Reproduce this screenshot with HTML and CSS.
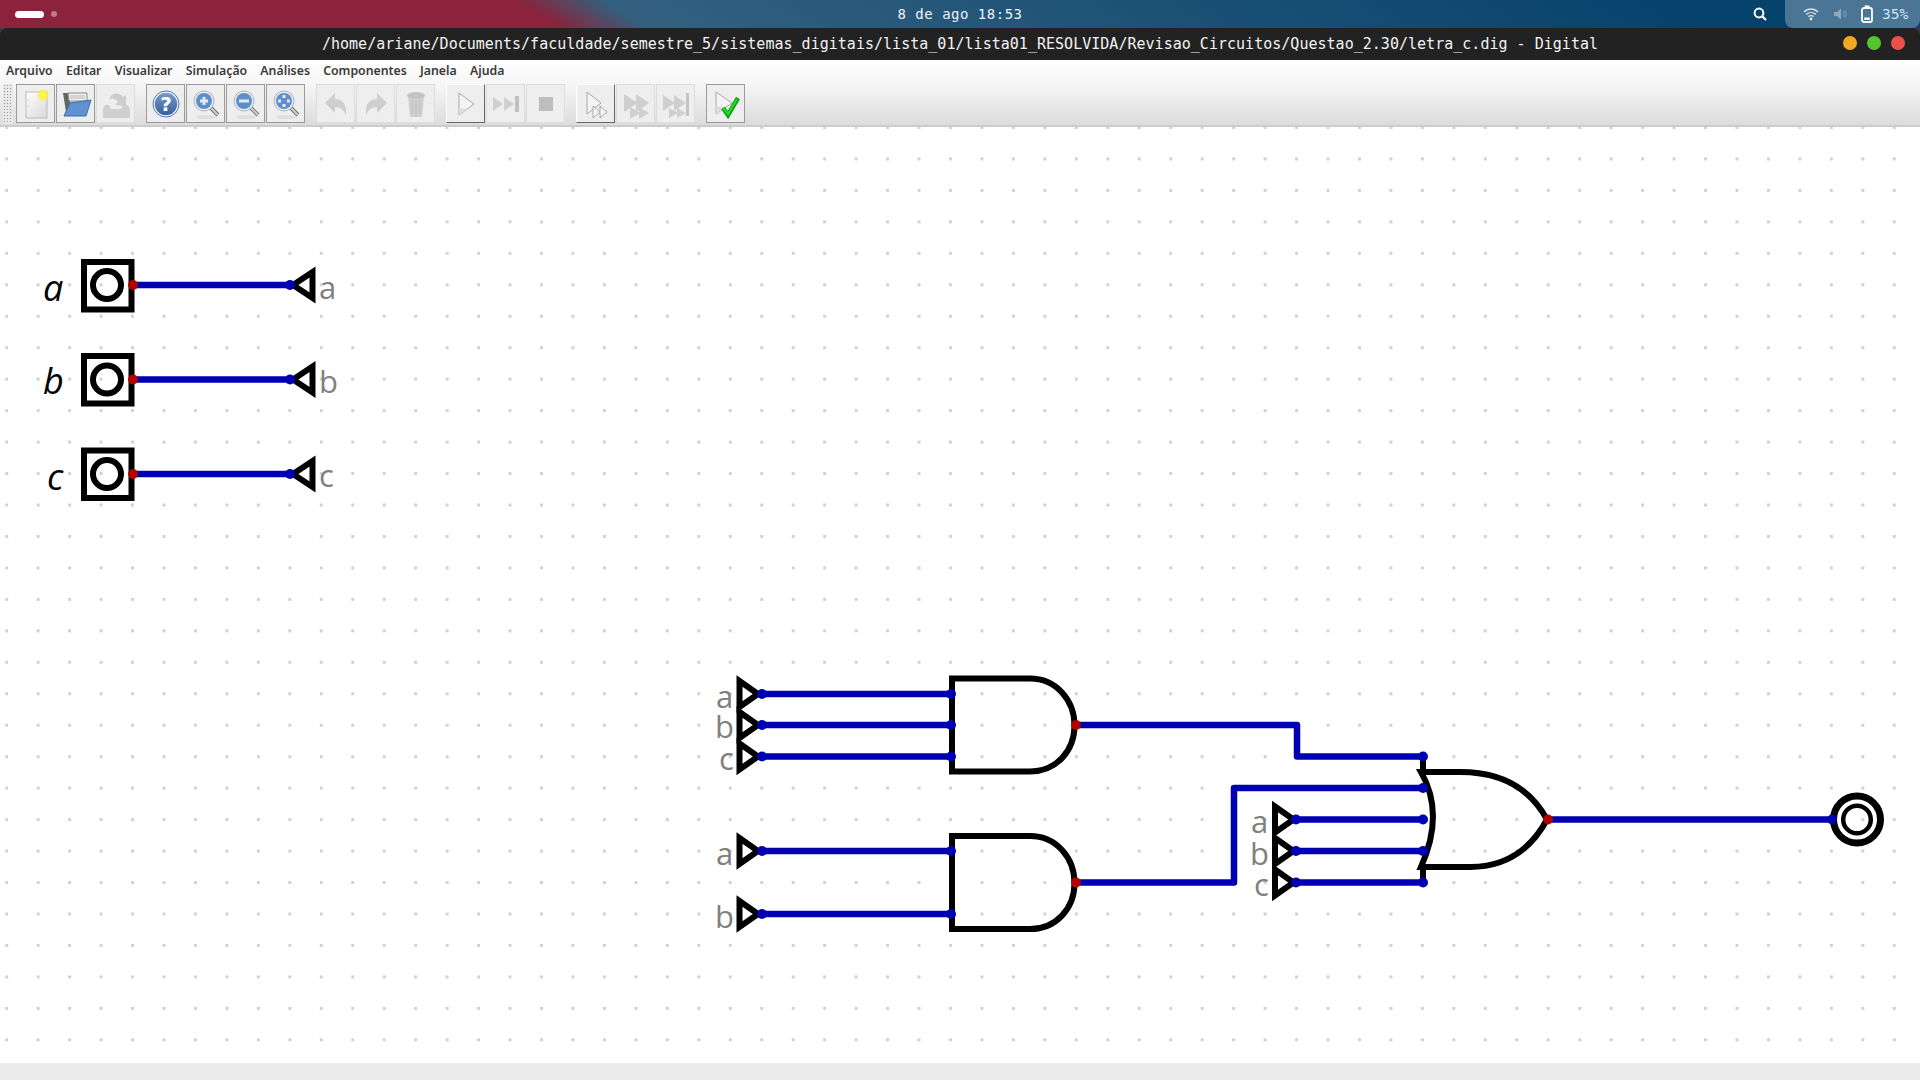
FILE: index.html
```html
<!DOCTYPE html>
<html lang="pt">
<head>
<meta charset="utf-8">
<title>Digital</title>
<link rel="stylesheet" href="styles.css">
</head>
<body>
<div class="app">
  <header class="topbar">
    <div class="workspaces"><span class="pill"></span><span class="wsdot"></span></div>
    <div class="clock">8 de ago 18:53</div>
    <svg class="searchicon" width="16" height="16" viewBox="0 0 16 16"><circle cx="7" cy="7" r="4.4" fill="none" stroke="#fff" stroke-width="2"/><path d="M10.2 10.2L14 14" stroke="#fff" stroke-width="2.2"/></svg>
    <div class="tray">
      <svg width="16" height="14" viewBox="0 0 16 14"><path d="M1 5C5 1 11 1 15 5M3.2 7.4C6 5 10 5 12.8 7.4M5.4 9.6C7 8.4 9 8.4 10.6 9.6" fill="none" stroke="#d5e0e8" stroke-width="1.4"/><circle cx="8" cy="12" r="1.4" fill="#e6edf2"/></svg>
      <svg width="14" height="14" viewBox="0 0 14 14"><path d="M1 5H4L8 1.5V12.5L4 9H1Z" fill="#8fa9bc"/><path d="M10 4.5C11.3 5.8 11.3 8.2 10 9.5M11.6 3C13.6 5 13.6 9 11.6 11" fill="none" stroke="#7d9ab0" stroke-width="1.2"/></svg>
      <svg width="12" height="18" viewBox="0 0 12 18"><rect x="1" y="3" width="10" height="14" rx="2" fill="none" stroke="#fff" stroke-width="1.8"/><rect x="3.6" y="0.5" width="4.8" height="2.5" fill="#fff"/><rect x="3.2" y="12.500" width="5.6" height="2.4" fill="#fff"/></svg>
      <span class="battery">35%</span>
    </div>
  </header>
  <div class="titlewrap">
    <div class="titlebar">
      <span class="titletext">/home/ariane/Documents/faculdade/semestre_5/sistemas_digitais/lista_01/lista01_RESOLVIDA/Revisao_Circuitos/Questao_2.30/letra_c.dig - Digital</span>
      <div class="winbtns"><span class="wb wb-min"></span><span class="wb wb-max"></span><span class="wb wb-close"></span></div>
    </div>
  </div>
  <nav class="menubar">
    <span>Arquivo</span><span>Editar</span><span>Visualizar</span><span>Simulação</span><span>Análises</span><span>Componentes</span><span>Janela</span><span>Ajuda</span>
  </nav>
  <div class="toolbar">
    <div class="grip"></div>
    <div class="group">
      <div class="tb"><svg width="32" height="32" viewBox="0 0 32 32"><defs><linearGradient id="pg" x1="0" y1="0" x2="1" y2="1"><stop offset="0" stop-color="#fff"/><stop offset="1" stop-color="#d8d8d8"/></linearGradient><radialGradient id="glow"><stop offset="0" stop-color="#ffff50"/><stop offset=".55" stop-color="#fff040"/><stop offset="1" stop-color="#fff040" stop-opacity="0"/></radialGradient></defs><rect x="6" y="4" width="21" height="26" fill="url(#pg)" stroke="#bbb"/><circle cx="8.5" cy="12" r=".6" fill="#aaa"/><circle cx="8.5" cy="18" r=".6" fill="#aaa"/><circle cx="23" cy="7" r="6.5" fill="url(#glow)"/></svg></div>
      <div class="tb"><svg width="32" height="32" viewBox="0 0 32 32"><path d="M3 5H9L10 7V24H6Z" fill="#666"/><path d="M8 5H27V13H9Z" fill="#eee" stroke="#888" stroke-width="1"/><path d="M10 8H25M10 10H25" stroke="#bbb"/><path d="M10 15L31 12L26 28H4Z" fill="#5e92d2" stroke="#3c6ba8"/></svg></div>
      <div class="tb off"><svg width="32" height="32" viewBox="0 0 32 32"><path d="M5 17H9L11 21H21L23 17H28L30 21V30H3V21Z" fill="#cfcfcf"/><path d="M9 11C12 4 19 4 23 9L26 7L26 18L15 17L18 14C16 11 13 10 9 11Z" fill="#cdcdcd"/></svg></div>
    </div>
    <div class="group">
      <div class="tb"><svg width="32" height="32" viewBox="0 0 32 32"><defs><linearGradient id="hb" x1="0" y1="0" x2="0" y2="1"><stop offset="0" stop-color="#7d9fc9"/><stop offset="1" stop-color="#2f5d9c"/></linearGradient></defs><circle cx="16" cy="16" r="12" fill="url(#hb)" stroke="#fff" stroke-width="1.5"/><circle cx="16" cy="16" r="13" fill="none" stroke="#4a76ae"/><text class="helpq" x="16" y="22.5">?</text></svg></div>
      <div class="tb"><svg width="32" height="32" viewBox="0 0 32 32"><use href="#lens"/><path d="M10 13H18M14 9V17" stroke="#dfeaf6" stroke-width="3"/></svg></div>
      <div class="tb"><svg width="32" height="32" viewBox="0 0 32 32"><use href="#lens"/><path d="M9 13H19" stroke="#dfeaf6" stroke-width="3"/></svg></div>
      <div class="tb"><svg width="32" height="32" viewBox="0 0 32 32"><use href="#lens"/><path d="M14 7V10M14 16V19M8 13H11M17 13H20" stroke="#dfeaf6" stroke-width="3"/></svg></div>
    </div>
    <div class="group">
      <div class="tb off"><svg width="32" height="32" viewBox="0 0 32 32"><path d="M5 15L15 5V11C23 11 27 16 26 27C23 21 20 19 15 19V25Z" fill="#cfcfcf"/></svg></div>
      <div class="tb off"><svg width="32" height="32" viewBox="0 0 32 32"><path d="M27 15L17 5V11C9 11 5 16 6 27C9 21 12 19 17 19V25Z" fill="#cfcfcf"/></svg></div>
      <div class="tb off"><svg width="32" height="32" viewBox="0 0 32 32"><path d="M8 8H24L22 29H10Z" fill="#cfcfcf"/><ellipse cx="16" cy="7.5" rx="9" ry="3.5" fill="#c4c4c4"/><path d="M12 12V27M16 12V27M20 12V27" stroke="#bdbdbd"/></svg></div>
    </div>
    <div class="group">
      <div class="tb raised"><svg width="32" height="32" viewBox="0 0 32 32"><path d="M9 5L24 16L9 27Z" fill="#f4f4f4" stroke="#a8a8a8"/><path d="M9 20V27L17 21Z" fill="#ddd"/></svg></div>
      <div class="tb off"><svg width="32" height="32" viewBox="0 0 32 32"><path d="M3 9L13 16L3 23ZM14 9L24 16L14 23Z" fill="#cfcfcf"/><rect x="25" y="8" width="4" height="16" fill="#c0c0c0"/></svg></div>
      <div class="tb off"><svg width="32" height="32" viewBox="0 0 32 32"><rect x="9" y="9" width="14" height="14" fill="#bdbdbd"/></svg></div>
    </div>
    <div class="group">
      <div class="tb raised"><svg width="32" height="32" viewBox="0 0 32 32"><path d="M7 4L21 15L7 26Z" fill="#f4f4f4" stroke="#a8a8a8"/><path d="M13 18L20 24L13 30ZM20 18L27 24L20 30Z" fill="#f4f4f4" stroke="#a8a8a8"/></svg></div>
      <div class="tb off"><svg width="32" height="32" viewBox="0 0 32 32"><path d="M4 6L18 15L4 24ZM16 6L29 15L16 24ZM10 19L20 25L10 31ZM19 19L29 25L19 31Z" fill="#cfcfcf"/></svg></div>
      <div class="tb off"><svg width="32" height="32" viewBox="0 0 32 32"><path d="M3 7L15 15L3 23ZM14 7L26 15L14 23ZM9 20L18 25L9 30ZM17 20L26 25L17 30Z" fill="#cfcfcf"/><rect x="26" y="5" width="3" height="23" fill="#c4c4c4"/></svg></div>
    </div>
    <div class="group">
      <div class="tb"><svg width="32" height="32" viewBox="0 0 32 32"><path d="M6 4L22 15L6 26Z" fill="#f4f4f4" stroke="#a8a8a8"/><path d="M6 18V26L15 20Z" fill="#ddd"/><path d="M13 20L18 27L28 10" fill="none" stroke="#129c12" stroke-width="4.5"/><path d="M13 20L18 26L27 11" fill="none" stroke="#1ee01e" stroke-width="2"/></svg></div>
    </div>
  </div>
  <main class="canvas">
    <svg class="circuit" width="1920" height="936" viewBox="0 127 1920 936">
      <defs>
        <pattern id="grid" x="5.2" y="126" width="31.46" height="31.46" patternUnits="userSpaceOnUse">
          <rect x="0" y="0" width="3" height="3" fill="#d2d2d2"/>
        </pattern>
        <g id="lens">
          <ellipse cx="16" cy="29" rx="10" ry="2" fill="#dedede"/>
          <path d="M20 19L28 27" stroke="#777" stroke-width="4"/>
          <path d="M20 19L28 27" stroke="#ccc" stroke-width="2"/>
          <circle cx="14" cy="13" r="10" fill="#e9eff6" stroke="#a9b3bf"/>
          <circle cx="14" cy="13" r="8" fill="#5f8fc6"/>
        </g>
      </defs>
      <rect class="gridfill" x="0" y="127" width="1920" height="936"/>

      <!-- input block -->
      <path class="wire" d="M133 285H290M133 379.5H290M133 474H290"/>
      <rect class="part" x="84" y="262" width="47.5" height="47.5"/>
      <rect class="part" x="84" y="356" width="47.5" height="47.5"/>
      <rect class="part" x="84" y="450.5" width="47.5" height="47.5"/>
      <circle class="part" cx="107" cy="285" r="14"/>
      <circle class="part" cx="107" cy="379.5" r="14"/>
      <circle class="part" cx="107" cy="474" r="14"/>
      <polygon class="part" points="293,285 312.5,272 312.5,298"/>
      <polygon class="part" points="293,379.5 312.5,366.5 312.5,392.5"/>
      <polygon class="part" points="293,474 312.5,461 312.5,487"/>
      <circle class="out" cx="133" cy="285" r="5"/><circle class="out" cx="133" cy="379.5" r="5"/><circle class="out" cx="133" cy="474" r="5"/>
      <circle class="in" cx="290" cy="285" r="5"/><circle class="in" cx="290" cy="379.5" r="5"/><circle class="in" cx="290" cy="474" r="5"/>
      <text class="name" x="43" y="301">a</text>
      <text class="name" x="43" y="394">b</text>
      <text class="name" x="47" y="490">c</text>
      <text class="lab" x="319" y="299">a</text>
      <text class="lab" x="319" y="393">b</text>
      <text class="lab" x="319" y="487">c</text>

      <!-- wires -->
      <path class="wire" d="M762 694H952M762 725H952M762 756.5H952M762 851H952M762 914H952"/>
      <path class="wire" d="M1076 725H1297V756.5H1423"/>
      <path class="wire" d="M1076 882.5H1234V788H1423"/>
      <path class="wire" d="M1296 819.5H1423M1296 851H1423M1296 882.5H1423"/>
      <path class="wire" d="M1548 819.5H1832"/>

      <!-- triangles -->
      <polygon class="part" points="739.5,681 758,694 739.5,707"/>
      <polygon class="part" points="739.5,712 758,725 739.5,738"/>
      <polygon class="part" points="739.5,743.5 758,756.5 739.5,769.5"/>
      <polygon class="part" points="739.5,838 758,851 739.5,864"/>
      <polygon class="part" points="739.5,901 758,914 739.5,927"/>
      <polygon class="part" points="1275,806.5 1293.5,819.5 1275,832.5"/>
      <polygon class="part" points="1275,838 1293.5,851 1275,864"/>
      <polygon class="part" points="1275,869.5 1293.5,882.5 1275,895.5"/>

      <!-- gates -->
      <path class="part" d="M952 678.5H1030C1056 678.5 1074.5 700 1074.5 725.5C1074.5 751 1056 771.500 1030 771.500H952Z"/>
      <path class="part" d="M952 836H1030C1056 836 1074.500 857.500 1074.500 883C1074.500 908.500 1056 929 1030 929H952Z"/>
      <path class="part" d="M1423 757V772M1423 867V882"/>
      <path class="part" d="M1421 772H1460C1500 772 1530 788 1547 819.500C1530 851 1505 867 1470 867H1421C1434 838 1440 805 1421 772Z"/>
      <circle class="ring-outer" cx="1857" cy="819.500" r="23.5"/>
      <circle class="ring-inner" cx="1857" cy="819.500" r="13.8"/>

      <!-- pins -->
      <g class="in">
        <circle cx="762" cy="694" r="5"/><circle cx="762" cy="725" r="5"/><circle cx="762" cy="756.500" r="5"/>
        <circle cx="762" cy="851" r="5"/><circle cx="762" cy="914" r="5"/>
        <circle cx="951" cy="694" r="5"/><circle cx="951" cy="725" r="5"/><circle cx="951" cy="756.500" r="5"/>
        <circle cx="951" cy="851" r="5"/><circle cx="951" cy="914" r="5"/>
        <circle cx="1296" cy="819.500" r="5"/><circle cx="1296" cy="851" r="5"/><circle cx="1296" cy="882.500" r="5"/>
        <circle cx="1423" cy="756.500" r="5"/><circle cx="1423" cy="788" r="5"/><circle cx="1423" cy="819.500" r="5"/><circle cx="1423" cy="851" r="5"/><circle cx="1423" cy="882.500" r="5"/>
        <circle cx="1832" cy="819.500" r="5"/>
      </g>
      <g class="out">
        <circle cx="1076" cy="725" r="5"/><circle cx="1076" cy="882.500" r="5"/><circle cx="1548" cy="819.500" r="5"/>
      </g>

      <!-- labels -->
      <text class="lab" x="716" y="708">a</text>
      <text class="lab" x="715" y="738">b</text>
      <text class="lab" x="719" y="770">c</text>
      <text class="lab" x="716" y="865">a</text>
      <text class="lab" x="715" y="928">b</text>
      <text class="lab" x="1251" y="833">a</text>
      <text class="lab" x="1250" y="865">b</text>
      <text class="lab" x="1254" y="896">c</text>
    </svg>
  </main>
  <footer class="statusbar"></footer>
</div>
</body>
</html>
```

FILE: styles.css
```css
* { box-sizing: border-box; }
html, body { margin: 0; padding: 0; height: 100%; overflow: hidden; }
.app { width: 1920px; height: 1080px; display: flex; flex-direction: column; background: #fff; }

.topbar {
  height: 28px; flex: none; display: flex; align-items: center; position: relative;
  background: linear-gradient(32deg, #8a233b 0, #8a233b 28.5%, #33607f 33%, #05426c 88%, #05426c 100%);
  padding-left: 15px; color: #fff;
}
.workspaces { display: flex; align-items: center; gap: 7px; }
.pill { width: 29px; height: 7px; border-radius: 4px; background: #fff; }
.wsdot { width: 6px; height: 6px; border-radius: 50%; background: #c4788d; }
.clock {
  position: absolute; left: 0; right: 0; top: 0; text-align: center;
  font: 14px/28px "DejaVu Sans Mono", monospace; letter-spacing: .5px; color: #eef2f5;
}
.searchicon { margin-left: auto; margin-right: 17px; }
.tray {
  width: 135px; height: 28px; background: #4a7595; border-radius: 0 0 8px 8px;
  display: flex; align-items: center; padding-left: 18px; gap: 14px;
}
.battery { font: 14.5px "DejaVu Sans Mono", monospace; color: #cfe4f5; margin-left: -5px; }

.titlewrap { background: #3a3a3a; flex: none; }
.titlebar {
  height: 32px; background: #222; border-radius: 8px 8px 0 0; display: flex; align-items: center;
  justify-content: center; position: relative;
}
.titletext { font: 15px/32px "DejaVu Sans Mono", monospace; letter-spacing: .02px; color: #f2f2f2; white-space: pre; }
.winbtns { position: absolute; right: 15px; top: 8px; display: flex; gap: 10px; }
.wb { width: 14px; height: 14px; border-radius: 50%; }
.wb-min { background: #f2a91f; }
.wb-max { background: #55c52f; }
.wb-close { background: #ee4f4b; }

.menubar {
  height: 24px; flex: none; display: flex; align-items: center; gap: 13.2px; padding: 0 0 4px 6px;
  background: linear-gradient(#fff, #f6f6f6);
  font: 600 12.3px "Noto Sans", sans-serif; color: #3a3a3a;
}
.toolbar {
  height: 43px; flex: none; display: flex; align-items: flex-start; padding: 0 0 0 3px;
  background: linear-gradient(#f6f6f6, #dcdcdc); border-bottom: 2px solid #ccc;
}
.grip {
  width: 10px; height: 40px; margin-right: 3px;
  background-image: radial-gradient(#999 0.7px, transparent 0.9px);
  background-size: 3px 3px; background-color: #e8e8e8;
}
.group { display: flex; gap: 1px; }
.group + .group { margin-left: 11px; }
.tb {
  width: 39px; height: 39px; background: #eeeeee; border: 1px solid #9a9a9a;
  display: flex; align-items: center; justify-content: center;
}
.tb.off { border-color: #dcdcdc; }
.tb.raised { border-color: #fff #666 #666 #fff; }
.helpq { font: bold 20px "DejaVu Sans", sans-serif; fill: #fff; text-anchor: middle; }

.canvas { flex: 1; min-height: 0; background: #fff; }
.circuit { display: block; }
.gridfill { fill: url(#grid); }
.wire { fill: none; stroke: #0000b2; stroke-width: 6.5; stroke-linejoin: round; }
.part { fill: none; stroke: #000; stroke-width: 6; }
.ring-outer { fill: none; stroke: #000; stroke-width: 7; }
.ring-inner { fill: none; stroke: #000; stroke-width: 4.5; }
.in { fill: #0000b2; }
.out { fill: #b20000; }
.name { font: italic 36px "Open Sans", sans-serif; fill: #000; }
.lab { font: 31px "Open Sans", sans-serif; fill: #808080; }

.statusbar { height: 17px; flex: none; background: #ececec; }
```
